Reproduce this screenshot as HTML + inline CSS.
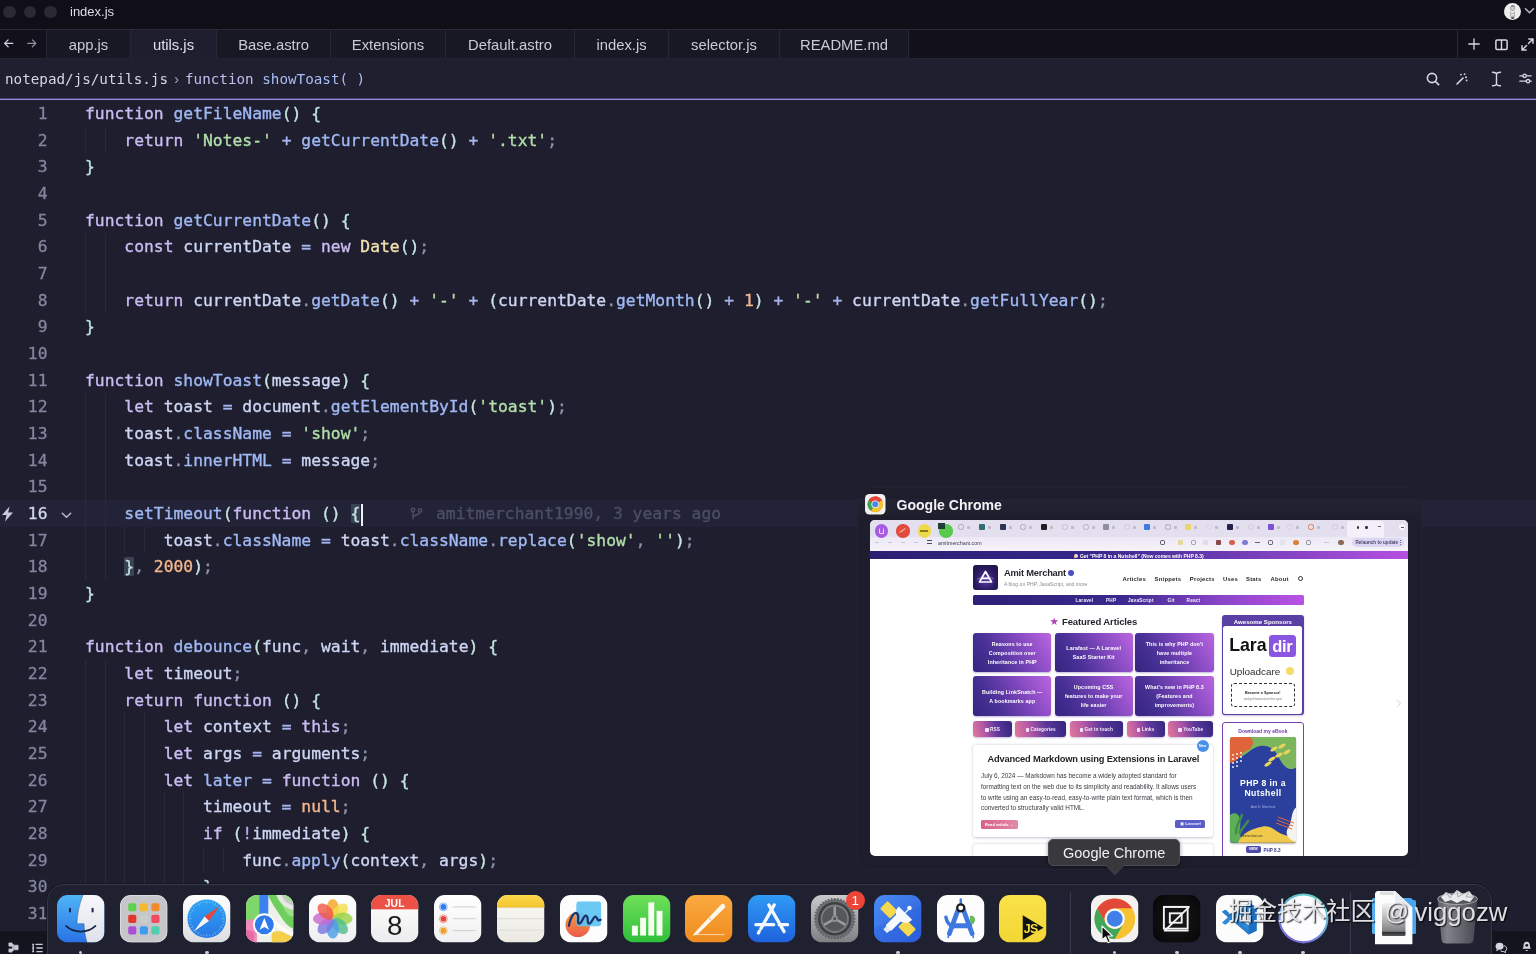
<!DOCTYPE html>
<html lang="en">
<head>
<meta charset="utf-8">
<title>index.js</title>
<style>
*{box-sizing:border-box;margin:0;padding:0}
html,body{width:1536px;height:954px;overflow:hidden;background:#1e1e2e}
body{position:relative;font-family:"Liberation Sans",sans-serif;color:#cdd6f4}
.abs{position:absolute}
svg{display:block;overflow:visible}
/* title bar */
#titlebar{position:absolute;left:0;top:0;width:1536px;height:29px;background:#100f18}
#titlebar .tl{position:absolute;top:5.5px;width:12.5px;height:12.5px;border-radius:50%;background:#2b2a33}
#titlebar .ttl{position:absolute;left:70px;top:4px;font-size:13px;line-height:16px;color:#dcdce6}
/* tab bar */
#tabbar{position:absolute;left:0;top:29px;width:1536px;height:30px;background:#12111b;border-top:1px solid #2a2a38;border-bottom:1px solid #242433}
.tab{position:absolute;top:0;height:28px;border-left:1px solid #262635;font-size:14.8px;line-height:31px;text-align:center;color:#c9cad8;background:#181824}
.tab.active{background:#1e1e2e;height:29px;color:#dfe0ee}
/* breadcrumb */
#crumb{position:absolute;left:0;top:59px;width:1536px;height:41px;background:#1f1f2f;border-bottom:1px solid #928bd6}
#crumb:after{content:'';position:absolute;left:0;top:39px;width:1536px;height:1px;background:#4a4678}
#crumb .p{position:absolute;left:5px;top:9px;font-family:"DejaVu Sans Mono","Liberation Mono",monospace;font-size:14.25px;line-height:22px;white-space:pre;color:#d6d6e6}
/* editor */
#editor{position:absolute;left:0;top:100px;width:1536px;height:854px;background:#1e1e2e;overflow:hidden}
.ln,.cl{position:absolute;font-family:"DejaVu Sans Mono","Liberation Mono",monospace;font-size:16.33px;line-height:26.67px;height:26.67px;white-space:pre}
.ln{left:0;width:47.5px;text-align:right;color:#83869f;-webkit-text-stroke:0.3px}
.cl{left:85px;color:#cdd6f4;-webkit-text-stroke:0.35px}
.hl{background:#3a4152;border-radius:1px}
.k{color:#cbbdf2}.f{color:#a0b9f4}.s{color:#b2dfa9}.n{color:#f3b68e}.y{color:#f1e1b0}.b{color:#bfe5de}.o{color:#a7b4ee}.c{color:#8e93ac}.p{color:#c6e6e2}
.guide{position:absolute;width:1px;background:#29293b}
#pv .t{white-space:nowrap}
#pv .abs{position:absolute}
#root{position:absolute;left:0;top:0;width:1536px;height:954px;will-change:transform;overflow:hidden}
</style>
</head>
<body>
<div id="root">
<div id="titlebar">
  <div class="tl" style="left:3px"></div><div class="tl" style="left:23.5px"></div><div class="tl" style="left:44px"></div>
  <div class="ttl">index.js</div>
  <svg class="abs" style="left:1503.500px;top:3px" width="17" height="17" viewBox="0 0 17 17"><circle cx="8.500" cy="8.500" r="8.500" fill="#ededed"/><path d="M6.500 4.500c0-2 4-2 4 0.300 0 1.800-0.600 2.700-2 2.700s-2-1-2-3z" fill="#d0d0d0" stroke="#6a6a6a" stroke-width="0.600"/><path d="M7.300 3.200c1-0.800 2.600-0.600 3.200 0.500" stroke="#333" stroke-width="0.700" fill="none"/><path d="M6.800 8.500c-0.500 2 0 5 0.500 7M10.200 8.500c0.500 2 0.300 5-0.200 7M7.500 10.500h2M7.800 13h1.500" stroke="#777" stroke-width="0.600" fill="none"/><path d="M7.500 13.500c0.800 0.600 1.500 0.600 2.300 0v2.500h-2.300z" fill="#555"/></svg>
  <svg class="abs" style="left:1524px;top:7px" width="11" height="8" viewBox="0 0 11 8"><path d="M1.5 1.8 L5.5 5.8 L9.5 1.8" fill="none" stroke="#b9bac8" stroke-width="1.5" stroke-linecap="round" stroke-linejoin="round"/></svg>
</div>
<div id="tabbar">
  <svg class="abs" style="left:3px;top:8px" width="11.500" height="10.700" viewBox="0 0 14 13"><path d="M12 6.5H2.2M6.2 2.3L2 6.5l4.2 4.2" fill="none" stroke="#d4d5e2" stroke-width="1.5" stroke-linecap="round" stroke-linejoin="round"/></svg>
  <svg class="abs" style="left:25.500px;top:8px" width="11.500" height="10.700" viewBox="0 0 14 13"><path d="M2 6.5h9.8M7.8 2.3L12 6.5l-4.2 4.2" fill="none" stroke="#8e8fa0" stroke-width="1.5" stroke-linecap="round" stroke-linejoin="round"/></svg>
  <div class="tab" style="left:46px;width:84px">app.js</div>
  <div class="tab active" style="left:130px;width:86px">utils.js</div>
  <div class="tab" style="left:216px;width:114px">Base.astro</div>
  <div class="tab" style="left:330px;width:115px">Extensions</div>
  <div class="tab" style="left:445px;width:129px">Default.astro</div>
  <div class="tab" style="left:574px;width:94px">index.js</div>
  <div class="tab" style="left:668px;width:111px">selector.js</div>
  <div class="tab" style="left:779px;width:129px">README.md</div>
  <div class="tab" style="left:908px;width:0;"></div>
  <div class="abs" style="left:1457px;top:0;width:1px;height:28px;background:#2a2a3a"></div>
  <svg class="abs" style="left:1468px;top:8px" width="12" height="12" viewBox="0 0 12 12"><path d="M6 0.8v10.4M0.8 6h10.4" fill="none" stroke="#d7d8e4" stroke-width="1.3" stroke-linecap="round"/></svg>
  <svg class="abs" style="left:1494.5px;top:8.5px" width="13" height="12" viewBox="0 0 13 12"><rect x="0.9" y="0.9" width="11.2" height="9.6" rx="1.2" fill="none" stroke="#d7d8e4" stroke-width="1.5"/><path d="M6.5 1v9.5" stroke="#d7d8e4" stroke-width="1.4"/></svg>
  <svg class="abs" style="left:1520.5px;top:7.5px" width="13" height="13" viewBox="0 0 13 13"><path d="M7.8 1h4.2v4.2M12 1L7.4 5.6M5.2 12H1V7.8M1 12l4.6-4.6" fill="none" stroke="#d7d8e4" stroke-width="1.4" stroke-linecap="round" stroke-linejoin="round"/></svg>
</div>
<div id="crumb">
  <div class="p">notepad/js/utils.js<span style="color:#a9a9bd;font-family:'Liberation Sans',sans-serif;display:inline-block;width:17px;text-align:center">›</span><span style="color:#c5bdf0">function</span> <span style="color:#a9bdf5">showToast( )</span></div>
  <svg class="abs" style="left:1426px;top:13px" width="14" height="14" viewBox="0 0 14 14"><circle cx="6" cy="6" r="4.6" fill="none" stroke="#d7d8e4" stroke-width="1.6"/><path d="M9.5 9.5L12.6 12.6" stroke="#d7d8e4" stroke-width="1.7" stroke-linecap="round"/></svg>
  <svg class="abs" style="left:1456px;top:14px" width="13" height="12" viewBox="0 0 13 12"><path d="M1 11L7 5" stroke="#d7d8e4" stroke-width="1.6" stroke-linecap="round"/><circle cx="5" cy="1.6" r="0.9" fill="#d7d8e4"/><circle cx="8.6" cy="1.2" r="0.9" fill="#d7d8e4"/><circle cx="10" cy="4.2" r="1" fill="#d7d8e4"/><circle cx="10.6" cy="7.4" r="0.9" fill="#d7d8e4"/></svg>
  <svg class="abs" style="left:1491px;top:12px" width="11" height="16" viewBox="0 0 11 16"><path d="M1.5 1.2c2.2 0 4 .4 4 2.2 0-1.8 1.8-2.2 4-2.2M1.5 14.8c2.2 0 4-.4 4-2.2 0 1.800 1.800 2.200 4 2.200M5.500 3v10" fill="none" stroke="#d7d8e4" stroke-width="1.400" stroke-linecap="round"/></svg>
  <svg class="abs" style="left:1519px;top:13px" width="13" height="13" viewBox="0 0 13 13"><path d="M0.800 3.800h3.200M7.600 3.800h4.600M0.800 9.200h6M11 9.200h1.200" stroke="#d7d8e4" stroke-width="1.300" stroke-linecap="round"/><circle cx="5.600" cy="3.800" r="1.700" fill="none" stroke="#d7d8e4" stroke-width="1.300"/><circle cx="9" cy="9.200" r="1.700" fill="none" stroke="#d7d8e4" stroke-width="1.300"/></svg>
</div>
<div id="editor">
<div class="abs" style="left:0;top:400.05px;width:1536px;height:26.67px;background:#232337"></div>
<div class="guide" style="left:85.0px;top:26.67px;height:26.67px"></div>
<div class="guide" style="left:104.7px;top:26.67px;height:26.67px"></div>
<div class="guide" style="left:85.0px;top:133.35px;height:26.67px"></div>
<div class="guide" style="left:104.7px;top:133.35px;height:26.67px"></div>
<div class="guide" style="left:85.0px;top:160.02px;height:26.67px"></div>
<div class="guide" style="left:104.7px;top:160.02px;height:26.67px"></div>
<div class="guide" style="left:85.0px;top:186.69px;height:26.67px"></div>
<div class="guide" style="left:104.7px;top:186.69px;height:26.67px"></div>
<div class="guide" style="left:85.0px;top:293.37px;height:26.67px"></div>
<div class="guide" style="left:104.7px;top:293.37px;height:26.67px"></div>
<div class="guide" style="left:85.0px;top:320.04px;height:26.67px"></div>
<div class="guide" style="left:104.7px;top:320.04px;height:26.67px"></div>
<div class="guide" style="left:85.0px;top:346.71px;height:26.67px"></div>
<div class="guide" style="left:104.7px;top:346.71px;height:26.67px"></div>
<div class="guide" style="left:85.0px;top:373.38px;height:26.67px"></div>
<div class="guide" style="left:104.7px;top:373.38px;height:26.67px"></div>
<div class="guide" style="left:85.0px;top:400.05px;height:26.67px"></div>
<div class="guide" style="left:104.7px;top:400.05px;height:26.67px"></div>
<div class="guide" style="left:85.0px;top:426.72px;height:26.67px"></div>
<div class="guide" style="left:104.7px;top:426.72px;height:26.67px"></div>
<div class="guide" style="left:124.3px;top:426.72px;height:26.67px"></div>
<div class="guide" style="left:144.0px;top:426.72px;height:26.67px"></div>
<div class="guide" style="left:85.0px;top:453.39px;height:26.67px"></div>
<div class="guide" style="left:104.7px;top:453.39px;height:26.67px"></div>
<div class="guide" style="left:85.0px;top:560.07px;height:26.67px"></div>
<div class="guide" style="left:104.7px;top:560.07px;height:26.67px"></div>
<div class="guide" style="left:85.0px;top:586.74px;height:26.67px"></div>
<div class="guide" style="left:104.7px;top:586.74px;height:26.67px"></div>
<div class="guide" style="left:85.0px;top:613.41px;height:26.67px"></div>
<div class="guide" style="left:104.7px;top:613.41px;height:26.67px"></div>
<div class="guide" style="left:124.3px;top:613.41px;height:26.67px"></div>
<div class="guide" style="left:144.0px;top:613.41px;height:26.67px"></div>
<div class="guide" style="left:85.0px;top:640.08px;height:26.67px"></div>
<div class="guide" style="left:104.7px;top:640.08px;height:26.67px"></div>
<div class="guide" style="left:124.3px;top:640.08px;height:26.67px"></div>
<div class="guide" style="left:144.0px;top:640.08px;height:26.67px"></div>
<div class="guide" style="left:85.0px;top:666.75px;height:26.67px"></div>
<div class="guide" style="left:104.7px;top:666.75px;height:26.67px"></div>
<div class="guide" style="left:124.3px;top:666.75px;height:26.67px"></div>
<div class="guide" style="left:144.0px;top:666.75px;height:26.67px"></div>
<div class="guide" style="left:85.0px;top:693.42px;height:26.67px"></div>
<div class="guide" style="left:104.7px;top:693.42px;height:26.67px"></div>
<div class="guide" style="left:124.3px;top:693.42px;height:26.67px"></div>
<div class="guide" style="left:144.0px;top:693.42px;height:26.67px"></div>
<div class="guide" style="left:163.6px;top:693.42px;height:26.67px"></div>
<div class="guide" style="left:183.3px;top:693.42px;height:26.67px"></div>
<div class="guide" style="left:85.0px;top:720.09px;height:26.67px"></div>
<div class="guide" style="left:104.7px;top:720.09px;height:26.67px"></div>
<div class="guide" style="left:124.3px;top:720.09px;height:26.67px"></div>
<div class="guide" style="left:144.0px;top:720.09px;height:26.67px"></div>
<div class="guide" style="left:163.6px;top:720.09px;height:26.67px"></div>
<div class="guide" style="left:183.3px;top:720.09px;height:26.67px"></div>
<div class="guide" style="left:85.0px;top:746.76px;height:26.67px"></div>
<div class="guide" style="left:104.7px;top:746.76px;height:26.67px"></div>
<div class="guide" style="left:124.3px;top:746.76px;height:26.67px"></div>
<div class="guide" style="left:144.0px;top:746.76px;height:26.67px"></div>
<div class="guide" style="left:163.6px;top:746.76px;height:26.67px"></div>
<div class="guide" style="left:183.3px;top:746.76px;height:26.67px"></div>
<div class="guide" style="left:203.0px;top:746.76px;height:26.67px"></div>
<div class="guide" style="left:222.6px;top:746.76px;height:26.67px"></div>
<div class="guide" style="left:85.0px;top:773.43px;height:26.67px"></div>
<div class="guide" style="left:104.7px;top:773.43px;height:26.67px"></div>
<div class="guide" style="left:124.3px;top:773.43px;height:26.67px"></div>
<div class="guide" style="left:144.0px;top:773.43px;height:26.67px"></div>
<div class="guide" style="left:163.6px;top:773.43px;height:26.67px"></div>
<div class="guide" style="left:183.3px;top:773.43px;height:26.67px"></div>
<div class="guide" style="left:85.0px;top:800.10px;height:26.67px"></div>
<div class="guide" style="left:104.7px;top:800.10px;height:26.67px"></div>
<div class="guide" style="left:124.3px;top:800.10px;height:26.67px"></div>
<div class="guide" style="left:144.0px;top:800.10px;height:26.67px"></div>
<div class="guide" style="left:85.0px;top:826.77px;height:26.67px"></div>
<div class="guide" style="left:104.7px;top:826.77px;height:26.67px"></div>
<div class="guide" style="left:124.3px;top:826.77px;height:26.67px"></div>
<div class="guide" style="left:144.0px;top:826.77px;height:26.67px"></div>
<div class="ln" style="top:1.00px">1</div>
<div class="cl" style="top:1.00px"><span class="k">function</span> <span class="f">getFileName</span><span class="p">()</span> <span class="b">{</span></div>
<div class="ln" style="top:27.67px">2</div>
<div class="cl" style="top:27.67px">    <span class="k">return</span> <span class="s">'Notes-'</span> <span class="o">+</span> <span class="f">getCurrentDate</span><span class="p">()</span> <span class="o">+</span> <span class="s">'.txt'</span><span class="c">;</span></div>
<div class="ln" style="top:54.34px">3</div>
<div class="cl" style="top:54.34px"><span class="b">}</span></div>
<div class="ln" style="top:81.01px">4</div>
<div class="ln" style="top:107.68px">5</div>
<div class="cl" style="top:107.68px"><span class="k">function</span> <span class="f">getCurrentDate</span><span class="p">()</span> <span class="b">{</span></div>
<div class="ln" style="top:134.35px">6</div>
<div class="cl" style="top:134.35px">    <span class="k">const</span> currentDate <span class="o">=</span> <span class="k">new</span> <span class="y">Date</span><span class="p">()</span><span class="c">;</span></div>
<div class="ln" style="top:161.02px">7</div>
<div class="ln" style="top:187.69px">8</div>
<div class="cl" style="top:187.69px">    <span class="k">return</span> currentDate<span class="c">.</span><span class="f">getDate</span><span class="p">()</span> <span class="o">+</span> <span class="s">'-'</span> <span class="o">+</span> <span class="p">(</span>currentDate<span class="c">.</span><span class="f">getMonth</span><span class="p">()</span> <span class="o">+</span> <span class="n">1</span><span class="p">)</span> <span class="o">+</span> <span class="s">'-'</span> <span class="o">+</span> currentDate<span class="c">.</span><span class="f">getFullYear</span><span class="p">()</span><span class="c">;</span></div>
<div class="ln" style="top:214.36px">9</div>
<div class="cl" style="top:214.36px"><span class="b">}</span></div>
<div class="ln" style="top:241.03px">10</div>
<div class="ln" style="top:267.70px">11</div>
<div class="cl" style="top:267.70px"><span class="k">function</span> <span class="f">showToast</span><span class="p">(</span>message<span class="p">)</span> <span class="b">{</span></div>
<div class="ln" style="top:294.37px">12</div>
<div class="cl" style="top:294.37px">    <span class="k">let</span> toast <span class="o">=</span> document<span class="c">.</span><span class="f">getElementById</span><span class="p">(</span><span class="s">'toast'</span><span class="p">)</span><span class="c">;</span></div>
<div class="ln" style="top:321.04px">13</div>
<div class="cl" style="top:321.04px">    toast<span class="c">.</span><span class="f">className</span> <span class="o">=</span> <span class="s">'show'</span><span class="c">;</span></div>
<div class="ln" style="top:347.71px">14</div>
<div class="cl" style="top:347.71px">    toast<span class="c">.</span><span class="f">innerHTML</span> <span class="o">=</span> message<span class="c">;</span></div>
<div class="ln" style="top:374.38px">15</div>
<div class="ln" style="top:401.05px;color:#d5d8ee">16</div>
<div class="cl" style="top:401.05px">    <span class="f">setTimeout</span><span class="p">(</span><span class="k">function</span> <span class="p">()</span> <span class="b hl">{</span></div>
<div class="ln" style="top:427.72px">17</div>
<div class="cl" style="top:427.72px">        toast<span class="c">.</span><span class="f">className</span> <span class="o">=</span> toast<span class="c">.</span><span class="f">className</span><span class="c">.</span><span class="f">replace</span><span class="p">(</span><span class="s">'show'</span><span class="c">,</span> <span class="s">''</span><span class="p">)</span><span class="c">;</span></div>
<div class="ln" style="top:454.39px">18</div>
<div class="cl" style="top:454.39px">    <span class="b hl">}</span><span class="c">,</span> <span class="n">2000</span><span class="p">)</span><span class="c">;</span></div>
<div class="ln" style="top:481.06px">19</div>
<div class="cl" style="top:481.06px"><span class="b">}</span></div>
<div class="ln" style="top:507.73px">20</div>
<div class="ln" style="top:534.40px">21</div>
<div class="cl" style="top:534.40px"><span class="k">function</span> <span class="f">debounce</span><span class="p">(</span>func<span class="c">,</span> wait<span class="c">,</span> immediate<span class="p">)</span> <span class="b">{</span></div>
<div class="ln" style="top:561.07px">22</div>
<div class="cl" style="top:561.07px">    <span class="k">let</span> timeout<span class="c">;</span></div>
<div class="ln" style="top:587.74px">23</div>
<div class="cl" style="top:587.74px">    <span class="k">return</span> <span class="k">function</span> <span class="p">()</span> <span class="b">{</span></div>
<div class="ln" style="top:614.41px">24</div>
<div class="cl" style="top:614.41px">        <span class="k">let</span> context <span class="o">=</span> <span class="k">this</span><span class="c">;</span></div>
<div class="ln" style="top:641.08px">25</div>
<div class="cl" style="top:641.08px">        <span class="k">let</span> args <span class="o">=</span> arguments<span class="c">;</span></div>
<div class="ln" style="top:667.75px">26</div>
<div class="cl" style="top:667.75px">        <span class="k">let</span> <span class="f">later</span> <span class="o">=</span> <span class="k">function</span> <span class="p">()</span> <span class="b">{</span></div>
<div class="ln" style="top:694.42px">27</div>
<div class="cl" style="top:694.42px">            timeout <span class="o">=</span> <span class="n">null</span><span class="c">;</span></div>
<div class="ln" style="top:721.09px">28</div>
<div class="cl" style="top:721.09px">            <span class="k">if</span> <span class="p">(</span><span class="o">!</span>immediate<span class="p">)</span> <span class="b">{</span></div>
<div class="ln" style="top:747.76px">29</div>
<div class="cl" style="top:747.76px">                func<span class="c">.</span><span class="f">apply</span><span class="p">(</span>context<span class="c">,</span> args<span class="p">)</span><span class="c">;</span></div>
<div class="ln" style="top:774.43px">30</div>
<div class="cl" style="top:774.43px">            <span class="b">}</span></div>
<div class="ln" style="top:801.10px">31</div>
<div class="cl" style="top:801.10px">        <span class="b">}</span><span class="c">;</span></div>
<div class="ln" style="top:827.77px">32</div>
<div class="abs" style="left:361px;top:403.55px;width:2px;height:22px;background:#f0f0f8"></div>
<div class="cl" style="left:436px;top:401.05px;color:#4b4e66">amitmerchant1990, 3 years ago</div>
<svg class="abs" style="left:410px;top:407.05px" width="13" height="14" viewBox="0 0 13 14"><circle cx="3" cy="3" r="1.7" fill="none" stroke="#4b4e66" stroke-width="1.4"/><circle cx="10" cy="3.4" r="1.7" fill="none" stroke="#4b4e66" stroke-width="1.4"/><path d="M3 4.8v7M3 10.500c0-3 7-2 7-5.500" fill="none" stroke="#4b4e66" stroke-width="1.400" stroke-linecap="round"/></svg>
<svg class="abs" style="left:1px;top:406.05px" width="13" height="16" viewBox="0 0 13 16"><path d="M8.5 0.500L1 9h4.500L4 15.500 12 6.500H7.200z" fill="#c9cbe0"/></svg>
<svg class="abs" style="left:61px;top:411.55px" width="11" height="7" viewBox="0 0 11 7"><path d="M1.300 1.300L5.500 5.300 9.700 1.300" fill="none" stroke="#b7b9cf" stroke-width="1.500" stroke-linecap="round" stroke-linejoin="round"/></svg>
</div>
<div class="abs" style="left:857px;top:487px;width:565px;height:383px;border-radius:12px;background:#1d1d2c;border:1px solid #222233;overflow:hidden"><div style="position:absolute;left:0;top:11px;width:565px;height:20px;background:linear-gradient(#222234,#20202f 60%,rgba(29,29,44,0))"></div></div>
<svg class="abs" style="left:864.5px;top:493.5px" width="20.500" height="20.500" viewBox="0 0 40 40">
<rect x="0" y="0" width="40" height="40" rx="9" fill="#f1f0ee"/>
<circle cx="20" cy="20" r="15" fill="#e0453a"/>
<path d="M20 20 L7 12.500 A15 15 0 0 0 12.500 33 Z" fill="#3aa757"/>
<path d="M20 20 L12.500 33 A15 15 0 0 0 33 12.500 Z" fill="#f5c230"/>
<path d="M20 20 L33 12.500 A15 15 0 0 0 7 12.500 Z" fill="#e0453a"/>
<path d="M20 5 A15 15 0 0 1 33 12.500 L20 12.500 Z" fill="#e0453a"/>
<path d="M33 12.500 A15 15 0 0 1 12.500 33 L20 20 Z" fill="#f5c230"/>
<circle cx="20" cy="20" r="7.500" fill="#f1f0ee"/><circle cx="20" cy="20" r="5.800" fill="#4a86e8"/>
</svg>
<div class="abs" style="left:896.5px;top:495.700px;font-size:14.050px;line-height:18px;font-weight:bold;color:#f2f2f6">Google Chrome</div>
<div id="pv" class="abs" style="left:869.7px;top:519.9px;width:538.300px;height:336.400px;border-radius:5px;overflow:hidden;background:#fff">
<div class="abs" style="left:0.0px;top:0.0px;width:538.3px;height:17.1px;background:#e4dfee"></div>
<div class="abs" style="left:0.0px;top:17.1px;width:538.3px;height:14.0px;background:linear-gradient(#ece8f5,#f6f3fb)"></div>
<div class="abs" style="left:5.1px;top:4.5px;width:13.2px;height:13.2px;border-radius:50%;background:#a65be2"></div>
<div class="abs" style="left:26.8px;top:4.5px;width:13.2px;height:13.2px;border-radius:50%;background:#e04b3e"></div>
<div class="abs" style="left:48.0px;top:4.5px;width:13.2px;height:13.2px;border-radius:50%;background:#efd948"></div>
<div class="abs" style="left:69.7px;top:4.5px;width:13.2px;height:13.2px;border-radius:50%;background:#57c94c"></div>
<div class="abs" style="left:8.9px;top:8.1px;width:5.6px;height:5.6px;border:1px solid #e9d4fa;border-radius:1.500px;border-top:none"></div>
<div class="abs" style="left:29.8px;top:10.6px;width:7.0px;height:1.0px;background:#f6b0a8;transform:rotate(-35deg)"></div>
<div class="abs" style="left:50.6px;top:10.5px;width:8.0px;height:1.2px;background:#8a7a1e"></div>
<div class="abs" style="left:68.3px;top:3.6px;width:7.0px;height:6.0px;background:#223b3a"></div>
<div class="abs" style="left:88.7px;top:4.5px;width:5.2px;height:5.2px;border:1px solid #a9a7b6;border-radius:50%"></div>
<div class="abs" style="left:97.3px;top:6.1px;width:3.5px;height:2.6px;background:#bdbac9;border-radius:1px"></div>
<div class="abs" style="left:109.7px;top:4.5px;width:5.2px;height:5.2px;background:#2f6f73;border-radius:1px"></div>
<div class="abs" style="left:118.3px;top:6.1px;width:3.5px;height:2.6px;background:#bdbac9;border-radius:1px"></div>
<div class="abs" style="left:130.7px;top:4.5px;width:5.2px;height:5.2px;background:#2c3358;border-radius:1px"></div>
<div class="abs" style="left:139.3px;top:6.1px;width:3.5px;height:2.6px;background:#bdbac9;border-radius:1px"></div>
<div class="abs" style="left:150.7px;top:4.5px;width:5.2px;height:5.2px;border:1px solid #a9a7b6;border-radius:50%"></div>
<div class="abs" style="left:159.3px;top:6.1px;width:3.5px;height:2.6px;background:#bdbac9;border-radius:1px"></div>
<div class="abs" style="left:171.7px;top:4.5px;width:5.2px;height:5.2px;background:#1f1f24;border-radius:1px"></div>
<div class="abs" style="left:180.3px;top:6.1px;width:3.5px;height:2.6px;background:#bdbac9;border-radius:1px"></div>
<div class="abs" style="left:192.7px;top:4.5px;width:5.2px;height:5.2px;border:1px solid #c3c1cf;border-radius:50%"></div>
<div class="abs" style="left:201.3px;top:6.1px;width:3.5px;height:2.6px;background:#bdbac9;border-radius:1px"></div>
<div class="abs" style="left:213.7px;top:4.5px;width:5.2px;height:5.2px;border:1px solid #b0afbd;border-radius:50%"></div>
<div class="abs" style="left:222.3px;top:6.1px;width:3.5px;height:2.6px;background:#bdbac9;border-radius:1px"></div>
<div class="abs" style="left:233.7px;top:4.5px;width:5.2px;height:5.2px;background:#8f8e9c;border-radius:1px"></div>
<div class="abs" style="left:242.3px;top:6.1px;width:3.5px;height:2.6px;background:#bdbac9;border-radius:1px"></div>
<div class="abs" style="left:254.7px;top:4.5px;width:5.2px;height:5.2px;border:1px solid #cfcdd8;border-radius:50%"></div>
<div class="abs" style="left:263.3px;top:6.1px;width:3.5px;height:2.6px;background:#bdbac9;border-radius:1px"></div>
<div class="abs" style="left:274.7px;top:4.5px;width:5.2px;height:5.2px;background:#3f7be0;border-radius:1px"></div>
<div class="abs" style="left:283.3px;top:6.1px;width:3.5px;height:2.6px;background:#bdbac9;border-radius:1px"></div>
<div class="abs" style="left:295.7px;top:4.5px;width:5.2px;height:5.2px;border:1px solid #a2a5b5;border-radius:50%"></div>
<div class="abs" style="left:304.3px;top:6.1px;width:3.5px;height:2.6px;background:#bdbac9;border-radius:1px"></div>
<div class="abs" style="left:315.7px;top:4.5px;width:5.2px;height:5.2px;background:#e8d66a;border-radius:1px"></div>
<div class="abs" style="left:324.3px;top:6.1px;width:3.5px;height:2.6px;background:#bdbac9;border-radius:1px"></div>
<div class="abs" style="left:336.7px;top:4.5px;width:5.2px;height:5.2px;border:1px solid #d9d7e2;border-radius:50%"></div>
<div class="abs" style="left:345.3px;top:6.1px;width:3.5px;height:2.6px;background:#bdbac9;border-radius:1px"></div>
<div class="abs" style="left:357.7px;top:4.5px;width:5.2px;height:5.2px;background:#23234a;border-radius:1px"></div>
<div class="abs" style="left:366.3px;top:6.1px;width:3.5px;height:2.6px;background:#bdbac9;border-radius:1px"></div>
<div class="abs" style="left:378.7px;top:4.5px;width:5.2px;height:5.2px;border:1px solid #d1cfdc;border-radius:50%"></div>
<div class="abs" style="left:387.3px;top:6.1px;width:3.5px;height:2.6px;background:#bdbac9;border-radius:1px"></div>
<div class="abs" style="left:398.7px;top:4.5px;width:5.2px;height:5.2px;background:#7e4fd6;border-radius:1px"></div>
<div class="abs" style="left:407.3px;top:6.1px;width:3.5px;height:2.6px;background:#bdbac9;border-radius:1px"></div>
<div class="abs" style="left:417.7px;top:4.5px;width:5.2px;height:5.2px;border:1px solid #d4d2de;border-radius:50%"></div>
<div class="abs" style="left:426.3px;top:6.1px;width:3.5px;height:2.6px;background:#bdbac9;border-radius:1px"></div>
<div class="abs" style="left:438.7px;top:4.5px;width:5.2px;height:5.2px;border:1px solid #e2774a;border-radius:50%"></div>
<div class="abs" style="left:447.3px;top:6.1px;width:3.5px;height:2.6px;background:#bdbac9;border-radius:1px"></div>
<div class="abs" style="left:462.7px;top:4.5px;width:5.2px;height:5.2px;border:1px solid #cfcdd8;border-radius:50%"></div>
<div class="abs" style="left:471.3px;top:6.1px;width:3.5px;height:2.6px;background:#bdbac9;border-radius:1px"></div>
<div class="abs" style="left:477.3px;top:1.6px;width:37.0px;height:15.5px;background:#f3f0fa;border-radius:3px 3px 0 0"></div>
<div class="abs" style="left:487.3px;top:6.3px;width:2.4px;height:2.4px;background:#34343c;border-radius:50%"></div>
<div class="abs" style="left:495.8px;top:6.3px;width:2.4px;height:2.4px;background:#34343c;border-radius:50%"></div>
<div class="abs" style="left:508.3px;top:6.6px;width:3.0px;height:1.0px;background:#6a6a75"></div>
<div class="abs" style="left:529.8px;top:4.1px;width:6.0px;height:6.0px;background:#fbfaff;border-radius:50%"></div>
<div class="abs" style="left:531.6px;top:6.7px;width:2.4px;height:1.0px;background:#55555f"></div>
<div class="abs" style="left:5.3px;top:21.9px;width:4.0px;height:1.0px;background:#c9c6d6"></div>
<div class="abs" style="left:18.3px;top:21.9px;width:4.0px;height:1.0px;background:#c9c6d6"></div>
<div class="abs" style="left:31.3px;top:21.9px;width:4.0px;height:1.0px;background:#c9c6d6"></div>
<div class="abs" style="left:44.3px;top:21.9px;width:4.0px;height:1.0px;background:#c9c6d6"></div>
<div class="abs" style="left:57.8px;top:20.6px;width:5.0px;height:1.0px;background:#4a4a58"></div>
<div class="abs" style="left:57.8px;top:23.1px;width:5.0px;height:1.0px;background:#4a4a58"></div>
<div class="abs t" style="left:68.3px;top:20.1px;font-size:5.30px;line-height:6.36px;color:#3b3b48">amitmerchant.com</div>
<div class="abs" style="left:290.8px;top:20.1px;width:5.0px;height:5.0px;border:1px solid #55555f;border-radius:1.500px"></div>
<div class="abs" style="left:308.8px;top:20.1px;width:5.0px;height:5.0px;background:#e6d79a;border-radius:1px"></div>
<div class="abs" style="left:321.8px;top:20.1px;width:5.0px;height:5.0px;border:1px solid #9a9aa6;border-radius:1.500px"></div>
<div class="abs" style="left:333.8px;top:20.1px;width:5.0px;height:5.0px;background:#dddbe6;border-radius:1px"></div>
<div class="abs" style="left:346.8px;top:20.1px;width:5.0px;height:5.0px;background:#8e4a4a;border-radius:1px"></div>
<div class="abs" style="left:359.5px;top:19.8px;width:5.6px;height:5.6px;background:#d8604f;border-radius:50%"></div>
<div class="abs" style="left:372.5px;top:19.8px;width:5.6px;height:5.6px;background:#7f7fd0;border-radius:50%"></div>
<div class="abs" style="left:385.8px;top:22.1px;width:5.0px;height:1.0px;background:#666"></div>
<div class="abs" style="left:398.8px;top:20.1px;width:5.0px;height:5.0px;border:1px solid #5a5a66;border-radius:1.500px"></div>
<div class="abs" style="left:410.8px;top:20.1px;width:5.0px;height:5.0px;background:#e3e1ea;border-radius:1px"></div>
<div class="abs" style="left:423.5px;top:19.8px;width:5.6px;height:5.6px;background:#d9813c;border-radius:50%"></div>
<div class="abs" style="left:436.8px;top:20.1px;width:5.0px;height:5.0px;border:1px solid #8a8a96;border-radius:1.500px"></div>
<div class="abs" style="left:454.8px;top:22.1px;width:5.0px;height:1.0px;background:#c9c6d6"></div>
<div class="abs" style="left:468.5px;top:19.8px;width:5.6px;height:5.6px;background:#8a6a58;border-radius:50%"></div>
<div class="abs" style="left:482.3px;top:18.4px;width:52.0px;height:8.7px;background:#dcd6f0;border-radius:4.500px"></div>
<div class="abs t" style="left:485.8px;top:20.6px;font-size:4.60px;line-height:5.52px;color:#4d4a70;font-weight:bold">Relaunch to update</div>
<div class="abs" style="left:530.5px;top:20.1px;width:1.2px;height:1.2px;background:#4d4a70;border-radius:50%"></div>
<div class="abs" style="left:530.5px;top:22.2px;width:1.2px;height:1.2px;background:#4d4a70;border-radius:50%"></div>
<div class="abs" style="left:530.5px;top:24.3px;width:1.2px;height:1.2px;background:#4d4a70;border-radius:50%"></div>
<div class="abs" style="left:0.0px;top:31.1px;width:538.3px;height:8.5px;background:linear-gradient(90deg,#2b1f72 0%,#35278a 40%,#6a3bb0 65%,#b650e2 100%)"></div>
<div class="abs t" style="left:119.1px;top:33.1px;width:300.0px;text-align:center;font-size:5.00px;line-height:6.00px;color:#fff;font-weight:bold"><span style="display:inline-block;width:4px;height:4px;margin-right:2px;border-radius:2px 2px 2px 0;background:linear-gradient(45deg,#f0a03c,#e8e4f4 60%);transform:rotate(0deg)"></span>Get "PHP 8 in a Nutshell" (Now comes with PHP 8.3)</div>
<div class="abs" style="left:103.3px;top:45.3px;width:25.0px;height:24.5px;border-radius:3px;background:radial-gradient(circle at 50% 60%,#5a3aa8 0,#2a1a5e 55%,#1b1240 100%)"><svg width="25" height="24.500" viewBox="0 0 25 24.500"><path d="M12.500 6.500L6.500 17h12zM9 13.300h7.500" fill="none" stroke="#fff" stroke-width="1.700" stroke-linejoin="round"/><path d="M4 14.500c5-3 12-3 17-0.500" stroke="#d9c8ff" stroke-width="0.600" fill="none" opacity="0.700"/></svg></div>
<div class="abs t" style="left:134.3px;top:48.2px;font-size:9.30px;line-height:11.16px;color:#26262e;font-weight:bold;letter-spacing:-0.200px">Amit Merchant</div>
<div class="abs" style="left:198.3px;top:50.1px;width:6.0px;height:6.0px;border-radius:50%;background:#4a4fc4"></div>
<div class="abs t" style="left:134.3px;top:61.4px;font-size:5.10px;line-height:6.12px;color:#8a8a96">A blog on PHP, JavaScript, and more</div>
<div class="abs t" style="left:252.9px;top:56.1px;font-size:5.90px;line-height:7.08px;color:#2a2a30;font-weight:bold;letter-spacing:0.220px">Articles</div>
<div class="abs t" style="left:284.9px;top:56.1px;font-size:5.90px;line-height:7.08px;color:#2a2a30;font-weight:bold;letter-spacing:0.220px">Snippets</div>
<div class="abs t" style="left:320.1px;top:56.1px;font-size:5.90px;line-height:7.08px;color:#2a2a30;font-weight:bold;letter-spacing:0.220px">Projects</div>
<div class="abs t" style="left:353.3px;top:56.1px;font-size:5.90px;line-height:7.08px;color:#2a2a30;font-weight:bold;letter-spacing:0.220px">Uses</div>
<div class="abs t" style="left:376.3px;top:56.1px;font-size:5.90px;line-height:7.08px;color:#2a2a30;font-weight:bold;letter-spacing:0.220px">Stats</div>
<div class="abs t" style="left:400.9px;top:56.1px;font-size:5.90px;line-height:7.08px;color:#2a2a30;font-weight:bold;letter-spacing:0.220px">About</div>
<div class="abs" style="left:428.3px;top:56.1px;width:5.5px;height:5.5px;border:1px solid #333;border-radius:50%"></div>
<div class="abs" style="left:103.3px;top:75.1px;width:331.0px;height:10.0px;border-radius:1.500px;background:linear-gradient(90deg,#2d2076 0%,#3a2a8e 45%,#8a45c8 75%,#b852e6 100%)"></div>
<div class="abs t" style="left:205.8px;top:78.2px;font-size:4.70px;line-height:5.64px;color:#f3ecff;font-weight:bold;letter-spacing:0.200px">Laravel</div>
<div class="abs t" style="left:236.3px;top:78.2px;font-size:4.70px;line-height:5.64px;color:#f3ecff;font-weight:bold;letter-spacing:0.200px">PHP</div>
<div class="abs t" style="left:258.3px;top:78.2px;font-size:4.70px;line-height:5.64px;color:#f3ecff;font-weight:bold;letter-spacing:0.200px">JavaScript</div>
<div class="abs t" style="left:297.9px;top:78.2px;font-size:4.70px;line-height:5.64px;color:#f3ecff;font-weight:bold;letter-spacing:0.200px">Git</div>
<div class="abs t" style="left:316.9px;top:78.2px;font-size:4.70px;line-height:5.64px;color:#f3ecff;font-weight:bold;letter-spacing:0.200px">React</div>
<div class="abs t" style="left:179.8px;top:95.1px;font-size:10.50px;line-height:12.60px;color:#b33fb8;font-family:'DejaVu Sans',sans-serif">★</div>
<div class="abs t" style="left:192.3px;top:96.4px;font-size:9.50px;line-height:11.40px;color:#26262e;font-weight:bold;letter-spacing:-0.120px">Featured Articles</div>
<div class="abs t" style="left:103.5px;top:113.0px;width:78.2px;height:39.3px;border-radius:3px;background:linear-gradient(58deg,#33257f 0%,#4a3197 30%,#8a4cc4 68%,#bb66e0 100%);box-shadow:0 1px 2px rgba(80,40,140,.35);display:flex;align-items:center;justify-content:center;text-align:center;color:#fff;font-weight:bold;font-size:5.300px;line-height:9px;letter-spacing:0.120px"><div style="padding-top:1.600px">Reasons to use<br>Composition over<br>Inheritance in PHP</div></div>
<div class="abs t" style="left:184.9px;top:113.0px;width:78.2px;height:39.3px;border-radius:3px;background:linear-gradient(58deg,#33257f 0%,#4a3197 30%,#8a4cc4 68%,#bb66e0 100%);box-shadow:0 1px 2px rgba(80,40,140,.35);display:flex;align-items:center;justify-content:center;text-align:center;color:#fff;font-weight:bold;font-size:5.300px;line-height:9px;letter-spacing:0.120px"><div style="padding-top:1.600px">Larafast — A Laravel<br>SaaS Starter Kit</div></div>
<div class="abs t" style="left:265.7px;top:113.0px;width:78.2px;height:39.3px;border-radius:3px;background:linear-gradient(58deg,#33257f 0%,#4a3197 30%,#8a4cc4 68%,#bb66e0 100%);box-shadow:0 1px 2px rgba(80,40,140,.35);display:flex;align-items:center;justify-content:center;text-align:center;color:#fff;font-weight:bold;font-size:5.300px;line-height:9px;letter-spacing:0.120px"><div style="padding-top:1.600px">This is why PHP don't<br>have multiple<br>inheritance</div></div>
<div class="abs t" style="left:103.5px;top:156.5px;width:78.2px;height:39.3px;border-radius:3px;background:linear-gradient(58deg,#33257f 0%,#4a3197 30%,#8a4cc4 68%,#bb66e0 100%);box-shadow:0 1px 2px rgba(80,40,140,.35);display:flex;align-items:center;justify-content:center;text-align:center;color:#fff;font-weight:bold;font-size:5.300px;line-height:9px;letter-spacing:0.120px"><div style="padding-top:1.600px">Building LinkSnatch —<br>A bookmarks app</div></div>
<div class="abs t" style="left:184.9px;top:156.5px;width:78.2px;height:39.3px;border-radius:3px;background:linear-gradient(58deg,#33257f 0%,#4a3197 30%,#8a4cc4 68%,#bb66e0 100%);box-shadow:0 1px 2px rgba(80,40,140,.35);display:flex;align-items:center;justify-content:center;text-align:center;color:#fff;font-weight:bold;font-size:5.300px;line-height:9px;letter-spacing:0.120px"><div style="padding-top:1.600px">Upcoming CSS<br>features to make your<br>life easier</div></div>
<div class="abs t" style="left:265.7px;top:156.5px;width:78.2px;height:39.3px;border-radius:3px;background:linear-gradient(58deg,#33257f 0%,#4a3197 30%,#8a4cc4 68%,#bb66e0 100%);box-shadow:0 1px 2px rgba(80,40,140,.35);display:flex;align-items:center;justify-content:center;text-align:center;color:#fff;font-weight:bold;font-size:5.300px;line-height:9px;letter-spacing:0.120px"><div style="padding-top:1.600px">What's new in PHP 8.3<br>(Features and<br>improvements)</div></div>
<div class="abs t" style="left:103.5px;top:201.2px;width:38.8px;height:15.8px;border-radius:3px;background:linear-gradient(75deg,#e07a98 0%,#b85aa6 28%,#5a379a 62%,#33267e 100%);box-shadow:0 1px 2px rgba(80,40,140,.3);display:flex;align-items:center;justify-content:center;color:#f6eefc;font-weight:bold;font-size:4.700px;line-height:6px;letter-spacing:0.100px;padding-top:1.600px"><span style="display:inline-block;width:3.500px;height:3.500px;background:#f4e6fa;border-radius:1px;margin-right:1.500px"></span>RSS</div>
<div class="abs t" style="left:145.7px;top:201.2px;width:50.6px;height:15.8px;border-radius:3px;background:linear-gradient(75deg,#e07a98 0%,#b85aa6 28%,#5a379a 62%,#33267e 100%);box-shadow:0 1px 2px rgba(80,40,140,.3);display:flex;align-items:center;justify-content:center;color:#f6eefc;font-weight:bold;font-size:4.700px;line-height:6px;letter-spacing:0.100px;padding-top:1.600px"><span style="display:inline-block;width:3.500px;height:3.500px;background:#f4e6fa;border-radius:1px;margin-right:1.500px"></span>Categories</div>
<div class="abs t" style="left:200.3px;top:201.2px;width:52.6px;height:15.8px;border-radius:3px;background:linear-gradient(75deg,#e07a98 0%,#b85aa6 28%,#5a379a 62%,#33267e 100%);box-shadow:0 1px 2px rgba(80,40,140,.3);display:flex;align-items:center;justify-content:center;color:#f6eefc;font-weight:bold;font-size:4.700px;line-height:6px;letter-spacing:0.100px;padding-top:1.600px"><span style="display:inline-block;width:3.500px;height:3.500px;background:#f4e6fa;border-radius:1px;margin-right:1.500px"></span>Get in touch</div>
<div class="abs t" style="left:256.9px;top:201.2px;width:38.0px;height:15.8px;border-radius:3px;background:linear-gradient(75deg,#e07a98 0%,#b85aa6 28%,#5a379a 62%,#33267e 100%);box-shadow:0 1px 2px rgba(80,40,140,.3);display:flex;align-items:center;justify-content:center;color:#f6eefc;font-weight:bold;font-size:4.700px;line-height:6px;letter-spacing:0.100px;padding-top:1.600px"><span style="display:inline-block;width:3.500px;height:3.500px;background:#f4e6fa;border-radius:1px;margin-right:1.500px"></span>Links</div>
<div class="abs t" style="left:298.3px;top:201.2px;width:45.5px;height:15.8px;border-radius:3px;background:linear-gradient(75deg,#e07a98 0%,#b85aa6 28%,#5a379a 62%,#33267e 100%);box-shadow:0 1px 2px rgba(80,40,140,.3);display:flex;align-items:center;justify-content:center;color:#f6eefc;font-weight:bold;font-size:4.700px;line-height:6px;letter-spacing:0.100px;padding-top:1.600px"><span style="display:inline-block;width:3.500px;height:3.500px;background:#f4e6fa;border-radius:1px;margin-right:1.500px"></span>YouTube</div>
<div class="abs" style="left:103.5px;top:225.1px;width:240.3px;height:92.0px;border-radius:3px;background:#fff;box-shadow:0 0.500px 3px rgba(60,50,90,.28)"></div>
<div class="abs t" style="left:93.6px;top:233.9px;width:260.0px;text-align:center;font-size:9.30px;line-height:11.16px;color:#1f1f26;font-weight:bold;letter-spacing:-0.150px;white-space:nowrap">Advanced Markdown using Extensions in Laravel</div>
<div class="abs t" style="left:111.3px;top:252.2px;font-size:6.38px;line-height:7.66px;color:#3a3a42;white-space:nowrap">July 6, 2024 — Markdown has become a widely adopted standard for</div>
<div class="abs t" style="left:111.3px;top:263.0px;font-size:6.38px;line-height:7.66px;color:#3a3a42;white-space:nowrap">formatting text on the web due to its simplicity and readability. It allows users</div>
<div class="abs t" style="left:111.3px;top:273.8px;font-size:6.38px;line-height:7.66px;color:#3a3a42;white-space:nowrap">to write using an easy-to-read, easy-to-write plain text format, which is then</div>
<div class="abs t" style="left:111.3px;top:284.6px;font-size:6.38px;line-height:7.66px;color:#3a3a42;white-space:nowrap">converted to structurally valid HTML.</div>
<div class="abs t" style="left:111.3px;top:299.7px;width:36.6px;height:9.0px;border-radius:1.500px;background:linear-gradient(90deg,#d9608c,#e08aa6);color:#fff;font-weight:bold;font-size:4.200px;line-height:9px;text-align:center">Read article →</div>
<div class="abs t" style="left:305.6px;top:300.1px;width:30.2px;height:8.3px;border-radius:1.500px;background:#5a5fc8;color:#eef;font-weight:bold;font-size:4.400px;line-height:8.300px;text-align:center"><span style="font-family:'DejaVu Sans',sans-serif">▣</span> Laravel</div>
<div class="abs t" style="left:326.9px;top:219.9px;width:12.0px;height:12.0px;border-radius:50%;background:#4a90e6;color:#fff;font-size:3.600px;line-height:12px;text-align:center;font-weight:bold">New</div>
<div class="abs" style="left:103.5px;top:324.1px;width:240.3px;height:26.0px;border-radius:3px;background:#fff;box-shadow:0 0.500px 3px rgba(60,50,90,.28)"></div>
<div class="abs t" style="left:93.6px;top:334.4px;width:260.0px;text-align:center;font-size:9.30px;line-height:11.16px;color:#1f1f26;font-weight:bold;letter-spacing:-0.150px;white-space:nowrap">A guide to PHP attributes</div>
<div class="abs" style="left:352.1px;top:94.8px;width:82.2px;height:100.8px;border-radius:3px;background:#5a3fa4;box-shadow:0 1px 2px rgba(80,40,140,.3)"></div>
<div class="abs t" style="left:353.2px;top:97.8px;width:80.0px;text-align:center;font-size:6.10px;line-height:7.32px;color:#fff;font-weight:bold">Awesome Sponsors</div>
<div class="abs" style="left:353.6px;top:106.6px;width:79.2px;height:87.5px;border-radius:2.500px;background:#fff"></div>
<div class="abs t" style="left:359.6px;top:115.6px;font-size:17.80px;line-height:21.36px;color:#111;font-weight:bold;letter-spacing:-0.100px">Lara</div>
<div class="abs t" style="left:399.1px;top:114.9px;width:27.2px;height:22.7px;border-radius:3.500px;background:#8a55e0;color:#fff;font-weight:bold;font-size:16.500px;line-height:22px;text-align:center;letter-spacing:-0.300px">dir</div>
<div class="abs t" style="left:360.0px;top:145.7px;font-size:9.90px;line-height:11.88px;color:#2a2a33">Uploadcare</div>
<div class="abs" style="left:416.3px;top:147.1px;width:8.0px;height:8.0px;border-radius:50%;background:#f2dc6a"></div>
<div class="abs" style="left:360.9px;top:163.6px;width:64.4px;height:23.2px;border:1.200px dashed #333;border-radius:3px"></div>
<div class="abs t" style="left:363.1px;top:170.8px;width:60.0px;text-align:center;font-size:3.80px;line-height:4.56px;color:#222;font-weight:bold">Become a Sponsor!</div>
<div class="abs t" style="left:363.1px;top:178.0px;width:60.0px;text-align:center;font-size:3.00px;line-height:3.60px;color:#777">and get featured on this spot</div>
<div class="abs" style="left:352.1px;top:202.4px;width:82.2px;height:147.7px;border-radius:3px;border:1px solid #7a3fb0;background:#fff"></div>
<div class="abs t" style="left:353.2px;top:208.6px;width:80.0px;text-align:center;font-size:5.00px;line-height:6.00px;color:#6a3aa8;font-weight:bold">Download my eBook</div>
<div class="abs" style="left:360.0px;top:217.4px;width:66.6px;height:105.7px;border-radius:3px;background:#2b409c;overflow:hidden;box-shadow:0 1px 2px rgba(0,0,0,.3)"><svg width="66.600" height="105.700" viewBox="0 0 66.600 105.700"><path d="M0 0h66.600v30c-8 6-14-2-18-10s-12-14-22-10-14 14-26 10z" fill="#7bb55e"/><path d="M0 0h20c6 4 2 12-4 14s-6 10-16 12z" fill="#e0643a"/><path d="M0 78c8-6 12 4 10 12s4 12 0 15.700H0z" fill="#5fae5a"/><path d="M8 105.700c4-10 14-14 24-16s14 6 22 8 10 4 12.600 8z" fill="#f0c84a"/><path d="M66.600 70c-6 4-4 14-8 20s-2 12 8 15.700z" fill="#f4f2ee"/><g fill="#e8d45a"><ellipse cx="44" cy="12" rx="4" ry="1.600" transform="rotate(-30 44 12)"/><ellipse cx="52" cy="9" rx="4" ry="1.600" transform="rotate(-30 52 9)"/><ellipse cx="49" cy="18" rx="4" ry="1.600" transform="rotate(-30 49 18)"/><ellipse cx="57" cy="15" rx="4" ry="1.600" transform="rotate(-30 57 15)"/><ellipse cx="42" cy="22" rx="4" ry="1.600" transform="rotate(-30 42 22)"/><ellipse cx="38" cy="27" rx="4" ry="1.600" transform="rotate(-30 38 27)"/></g><g fill="#fff"><circle cx="3" cy="18" r="0.900"/><circle cx="7" cy="17" r="0.900"/><circle cx="11" cy="16" r="0.900"/><circle cx="3" cy="22" r="0.900"/><circle cx="7" cy="21" r="0.900"/><circle cx="11" cy="20" r="0.900"/><circle cx="3" cy="26" r="0.900"/><circle cx="7" cy="25" r="0.900"/><circle cx="11" cy="24" r="0.900"/><circle cx="3" cy="30" r="0.900"/><circle cx="7" cy="29" r="0.900"/></g><path d="M48 80l16 6M47 83l16 6M46 86l16 6" stroke="#e0643a" stroke-width="1"/><path d="M6 96c0-8 4-12 6-18M10 96c2-6 6-8 8-12" stroke="#3f8f4a" stroke-width="2.500" fill="none" stroke-linecap="round"/></svg></div>
<div class="abs t" style="left:358.3px;top:257.9px;width:70.0px;text-align:center;font-size:8.60px;line-height:10.32px;color:#fff;font-weight:bold;letter-spacing:0.400px">PHP 8 in a</div>
<div class="abs t" style="left:358.3px;top:268.6px;width:70.0px;text-align:center;font-size:8.60px;line-height:10.32px;color:#fff;font-weight:bold;letter-spacing:0.400px">Nutshell</div>
<div class="abs t" style="left:358.3px;top:286.4px;width:70.0px;text-align:center;font-size:3.20px;line-height:3.84px;color:#aab6e8">Amit D. Merchant</div>
<div class="abs t" style="left:362.3px;top:315.2px;width:40.0px;text-align:center;font-size:2.60px;line-height:3.12px;color:#3a3a2a">amitmerchant.com</div>
<div class="abs t" style="left:376.3px;top:326.3px;width:15.0px;height:7.1px;border-radius:2px;background:#4a4aa8;color:#fff;font-weight:bold;font-size:3.600px;line-height:7.100px;text-align:center">NEW</div>
<div class="abs t" style="left:393.8px;top:327.8px;font-size:4.60px;line-height:5.52px;color:#3b3b8a;font-weight:bold">PHP 8.3</div>
<svg class="abs" style="left:526.8px;top:179.1px" width="6" height="9" viewBox="0 0 6 9"><path d="M1 1l3.500 3.500L1 8" fill="none" stroke="#e1e1e6" stroke-width="1.200"/></svg>
</div>
<div class="abs" style="left:1048.400px;top:839.300px;width:131.600px;height:26.700px;border-radius:5px;background:#38383d;border:1px solid #4b4b52;box-shadow:0 1px 4px rgba(0,0,0,.4)"></div>
<svg class="abs" style="left:1105.700px;top:865px" width="18" height="10" viewBox="0 0 18 10"><path d="M0 0h18L9 9.500z" fill="#38383d"/><path d="M0 0.500L9 9.500 18 0.500" fill="none" stroke="#4b4b52" stroke-width="1"/></svg>
<div class="abs" style="left:1048.400px;top:843.500px;width:131.600px;text-align:center;font-size:14.500px;line-height:18px;color:#f1f1f4">Google Chrome</div>
<div class="abs" style="left:0;top:931px;width:1536px;height:23px;background:#14141f"></div>
<svg class="abs" style="left:7.500px;top:942px" width="11" height="11" viewBox="0 0 12 12"><path d="M1 1h3.500v3.500H1zM1 7.500h3.500V11H1zM7 3.500h4v5H7zM4.500 2.700H6v6.500H4.500M6 6h1" fill="#c9cad8" stroke="#c9cad8" stroke-width="0.800"/></svg>
<svg class="abs" style="left:31px;top:942.500px" width="12.500" height="10" viewBox="0 0 13 11"><path d="M1 1.500h2M1 5.500h2M1 9.500h2M4.500 1.500h8M5.500 5.500h7M5.500 9.500h7M2 1.500v8" fill="none" stroke="#c9cad8" stroke-width="1.400"/></svg>
<svg class="abs" style="left:1494.500px;top:941.500px" width="12.500" height="10.800" viewBox="0 0 15 13"><ellipse cx="5.500" cy="5" rx="4.800" ry="4.200" fill="#d5d6e2"/><path d="M2 8l-0.500 3 3-1.500z" fill="#d5d6e2"/><path d="M11 4.500c2 0.500 3 2 3 3.500 0 1.300-0.700 2.300-1.700 3l0.300 1.800-2-1.200c-1.600 0.200-3-0.200-4-1" fill="none" stroke="#d5d6e2" stroke-width="1.200"/></svg>
<svg class="abs" style="left:1521.500px;top:941px" width="9.500" height="11" viewBox="0 0 12 14"><path d="M6 1c2.600 0 4 2 4 4.500 0 2.500 0.600 3.500 1.500 4.500h-11C1.400 9 2 8 2 5.500 2 3 3.400 1 6 1z" fill="#d5d6e2"/><path d="M4.300 11.500a1.800 1.800 0 0 0 3.400 0z" fill="#d5d6e2"/><circle cx="6" cy="5.500" r="1.800" fill="#13131d"/></svg>
<div class="abs" style="left:46.500px;top:884px;width:1445px;height:90px;border-radius:17px;background:#1f2030;border:1px solid #353649;box-shadow:0 0 0 0.500px #0e0e16"></div>
<svg class="abs" style="left:56.8px;top:894.5px" width="47.5" height="47.5" viewBox="0 0 48 48"><defs><clipPath id="c80"><rect width="48" height="48" rx="10.800"/></clipPath><linearGradient id="fnL" x1="0" y1="0" x2="0" y2="1"><stop offset="0" stop-color="#4fb4f6"/><stop offset="1" stop-color="#2a72e6"/></linearGradient><linearGradient id="fnR" x1="0" y1="0" x2="0" y2="1"><stop offset="0" stop-color="#f7f8fb"/><stop offset="1" stop-color="#dde1ea"/></linearGradient></defs><g clip-path="url(#c80)"><rect width="48" height="48" fill="url(#fnL)"/>
<path d="M26.300 0H48V48H30.300C28.500 42 27.500 35 27.300 29H20.200C20.500 18 23 8 26.300 0Z" fill="url(#fnR)"/>
<path d="M26.300 0C23 8 20.500 18 20.200 29H27.300C27.500 35 28.500 42 30.300 48" fill="none" stroke="#1c3a68" stroke-width="0.800" opacity=".5"/>
<rect x="12.100" y="12.800" width="2.100" height="5" rx="1.050" fill="#1a2c4a"/><rect x="34.900" y="12.800" width="2.100" height="5" rx="1.050" fill="#1a2c4a"/>
<path d="M9.100 31.300c8 7.600 21.800 7.600 29.800 0" fill="none" stroke="#16253f" stroke-width="1.700" stroke-linecap="round"/></g></svg>
<svg class="abs" style="left:119.7px;top:894.5px" width="47.5" height="47.5" viewBox="0 0 48 48"><defs><clipPath id="c143"><rect width="48" height="48" rx="10.800"/></clipPath></defs><g clip-path="url(#c143)"><rect width="48" height="48" fill="#c6c6ca"/><rect x="0.500" y="0.500" width="47" height="47" rx="10.500" fill="none" stroke="#dcdce0" stroke-width="1"/><rect x="8.3" y="8.3" width="8.200" height="8.200" rx="1.800" fill="#5fd04f"/><rect x="20.0" y="8.3" width="8.200" height="8.200" rx="1.800" fill="#f5b92e"/><rect x="31.7" y="8.3" width="8.200" height="8.200" rx="1.800" fill="#f08a2a"/><rect x="8.3" y="20.0" width="8.200" height="8.200" rx="1.800" fill="#e0382c"/><rect x="20.0" y="20.0" width="8.200" height="8.200" rx="1.800" fill="#c9cdc9"/><rect x="31.7" y="20.0" width="8.200" height="8.200" rx="1.800" fill="#ee4a62"/><rect x="8.3" y="31.7" width="8.200" height="8.200" rx="1.800" fill="#a94fd8"/><rect x="20.0" y="31.7" width="8.200" height="8.200" rx="1.800" fill="#3f9bf0"/><rect x="31.7" y="31.7" width="8.200" height="8.200" rx="1.800" fill="#4fcfae"/></g></svg>
<svg class="abs" style="left:183.1px;top:894.5px" width="47.5" height="47.5" viewBox="0 0 48 48"><defs><clipPath id="c206"><rect width="48" height="48" rx="10.800"/></clipPath><linearGradient id="sfb" x1="0" y1="0" x2="0" y2="1"><stop offset="0" stop-color="#ffffff"/><stop offset="1" stop-color="#dcdde0"/></linearGradient><linearGradient id="sfc" x1="0" y1="0" x2="0" y2="1"><stop offset="0" stop-color="#2aa4f4"/><stop offset="1" stop-color="#2a78e4"/></linearGradient></defs><g clip-path="url(#c206)"><rect width="48" height="48" fill="url(#sfb)"/><circle cx="24" cy="24" r="19.500" fill="url(#sfc)"/><path d="M39.50 24.00L42.00 24.00" stroke="#cfe6fb" stroke-width="0.500"/><path d="M40.25 26.87L41.73 27.13" stroke="#cfe6fb" stroke-width="0.500"/><path d="M39.50 29.64L40.91 30.16" stroke="#cfe6fb" stroke-width="0.500"/><path d="M37.42 31.75L39.59 33.00" stroke="#cfe6fb" stroke-width="0.500"/><path d="M36.64 34.61L37.79 35.57" stroke="#cfe6fb" stroke-width="0.500"/><path d="M34.61 36.64L35.57 37.79" stroke="#cfe6fb" stroke-width="0.500"/><path d="M31.75 37.42L33.00 39.59" stroke="#cfe6fb" stroke-width="0.500"/><path d="M29.64 39.50L30.16 40.91" stroke="#cfe6fb" stroke-width="0.500"/><path d="M26.87 40.25L27.13 41.73" stroke="#cfe6fb" stroke-width="0.500"/><path d="M24.00 39.50L24.00 42.00" stroke="#cfe6fb" stroke-width="0.500"/><path d="M21.13 40.25L20.87 41.73" stroke="#cfe6fb" stroke-width="0.500"/><path d="M18.36 39.50L17.84 40.91" stroke="#cfe6fb" stroke-width="0.500"/><path d="M16.25 37.42L15.00 39.59" stroke="#cfe6fb" stroke-width="0.500"/><path d="M13.39 36.64L12.43 37.79" stroke="#cfe6fb" stroke-width="0.500"/><path d="M11.36 34.61L10.21 35.57" stroke="#cfe6fb" stroke-width="0.500"/><path d="M10.58 31.75L8.41 33.00" stroke="#cfe6fb" stroke-width="0.500"/><path d="M8.50 29.64L7.09 30.16" stroke="#cfe6fb" stroke-width="0.500"/><path d="M7.75 26.87L6.27 27.13" stroke="#cfe6fb" stroke-width="0.500"/><path d="M8.50 24.00L6.00 24.00" stroke="#cfe6fb" stroke-width="0.500"/><path d="M7.75 21.13L6.27 20.87" stroke="#cfe6fb" stroke-width="0.500"/><path d="M8.50 18.36L7.09 17.84" stroke="#cfe6fb" stroke-width="0.500"/><path d="M10.58 16.25L8.41 15.00" stroke="#cfe6fb" stroke-width="0.500"/><path d="M11.36 13.39L10.21 12.43" stroke="#cfe6fb" stroke-width="0.500"/><path d="M13.39 11.36L12.43 10.21" stroke="#cfe6fb" stroke-width="0.500"/><path d="M16.25 10.58L15.00 8.41" stroke="#cfe6fb" stroke-width="0.500"/><path d="M18.36 8.50L17.84 7.09" stroke="#cfe6fb" stroke-width="0.500"/><path d="M21.13 7.75L20.87 6.27" stroke="#cfe6fb" stroke-width="0.500"/><path d="M24.00 8.50L24.00 6.00" stroke="#cfe6fb" stroke-width="0.500"/><path d="M26.87 7.75L27.13 6.27" stroke="#cfe6fb" stroke-width="0.500"/><path d="M29.64 8.50L30.16 7.09" stroke="#cfe6fb" stroke-width="0.500"/><path d="M31.75 10.58L33.00 8.41" stroke="#cfe6fb" stroke-width="0.500"/><path d="M34.61 11.36L35.57 10.21" stroke="#cfe6fb" stroke-width="0.500"/><path d="M36.64 13.39L37.79 12.43" stroke="#cfe6fb" stroke-width="0.500"/><path d="M37.42 16.25L39.59 15.00" stroke="#cfe6fb" stroke-width="0.500"/><path d="M39.50 18.36L40.91 17.84" stroke="#cfe6fb" stroke-width="0.500"/><path d="M40.25 21.13L41.73 20.87" stroke="#cfe6fb" stroke-width="0.500"/><path d="M37 11L21.800 21.800 26.200 26.200z" fill="#e8453a"/><path d="M11 37L21.800 21.800 26.200 26.200z" fill="#f4f6f8"/></g></svg>
<svg class="abs" style="left:245.9px;top:894.5px" width="47.5" height="47.5" viewBox="0 0 48 48"><defs><clipPath id="c269"><rect width="48" height="48" rx="10.800"/></clipPath></defs><g clip-path="url(#c269)"><rect width="48" height="48" fill="#eef0ea"/>
<path d="M0 0h14v22C8 24 4 30 0 32z" fill="#7fd66a"/>
<path d="M22 0h26v34c-6-2-10-8-14-14S26 8 22 0z" fill="#6fcf5c"/>
<path d="M30 0h18v22c-4 0-8-4-10-9S32 4 30 0z" fill="#9adf8a"/>
<path d="M36 0c2 5 6 9 12 10v5c-8-1-14-6-17-15z" fill="#e6e6e2"/><path d="M39 0c2 4 5 6 9 7v3c-6-1-10-4-12-10z" fill="#c9c9c6"/>
<path d="M0 26c4-2 8-2 11 0v22H0z" fill="#f08ab8"/><path d="M0 36c3-1 6 0 8 2v10H0z" fill="#e66aa6"/>
<path d="M26 38c5-2 12-2 18 2l4 3v5H26z" fill="#f3cf4a"/>
<path d="M30 26c5 4 12 10 18 12v4c-8-2-16-8-21-13z" fill="#fafaf7"/>
<rect x="13.500" y="0" width="9" height="22" fill="#3b82f0"/>
<circle cx="18.500" cy="30" r="11.500" fill="#fbfbfb"/><circle cx="18.500" cy="30" r="9.600" fill="#2f7bea"/>
<path d="M18.500 23.200L13.700 35l4.800-2.600 4.800 2.600z" fill="#fff"/></g></svg>
<svg class="abs" style="left:308.8px;top:894.5px" width="47.5" height="47.5" viewBox="0 0 48 48"><defs><clipPath id="c332"><rect width="48" height="48" rx="10.800"/></clipPath><linearGradient id="phb" x1="0" y1="0" x2="0" y2="1"><stop offset="0" stop-color="#ffffff"/><stop offset="1" stop-color="#eeeef0"/></linearGradient></defs><g clip-path="url(#c332)"><rect width="48" height="48" fill="url(#phb)"/><ellipse cx="24" cy="13.800" rx="6.200" ry="9.800" fill="#f5a623" opacity=".82" transform="rotate(0 24 24)"/><ellipse cx="24" cy="13.800" rx="6.200" ry="9.800" fill="#f0e04a" opacity=".82" transform="rotate(45 24 24)"/><ellipse cx="24" cy="13.800" rx="6.200" ry="9.800" fill="#9bd34a" opacity=".82" transform="rotate(90 24 24)"/><ellipse cx="24" cy="13.800" rx="6.200" ry="9.800" fill="#4fc08a" opacity=".82" transform="rotate(135 24 24)"/><ellipse cx="24" cy="13.800" rx="6.200" ry="9.800" fill="#4a9ee8" opacity=".82" transform="rotate(180 24 24)"/><ellipse cx="24" cy="13.800" rx="6.200" ry="9.800" fill="#7a78e0" opacity=".82" transform="rotate(225 24 24)"/><ellipse cx="24" cy="13.800" rx="6.200" ry="9.800" fill="#c86ad0" opacity=".82" transform="rotate(270 24 24)"/><ellipse cx="24" cy="13.800" rx="6.200" ry="9.800" fill="#ef5a4a" opacity=".82" transform="rotate(315 24 24)"/></g></svg>
<svg class="abs" style="left:370.9px;top:894.5px" width="47.5" height="47.5" viewBox="0 0 48 48"><defs><clipPath id="c394"><rect width="48" height="48" rx="10.800"/></clipPath><linearGradient id="clb" x1="0" y1="0" x2="0" y2="1"><stop offset="0" stop-color="#ffffff"/><stop offset="1" stop-color="#ececee"/></linearGradient></defs><g clip-path="url(#c394)"><rect width="48" height="48" fill="url(#clb)"/><rect width="48" height="14.500" fill="#ec5145"/><text x="24" y="11.800" text-anchor="middle" font-family="Liberation Sans, sans-serif" font-weight="bold" font-size="10.500" fill="#fff" letter-spacing="0.200">JUL</text><text x="24" y="40" text-anchor="middle" font-family="Liberation Sans, sans-serif" font-size="28" fill="#1c1c1e">8</text></g></svg>
<svg class="abs" style="left:433.8px;top:894.5px" width="47.5" height="47.5" viewBox="0 0 48 48"><defs><clipPath id="c457"><rect width="48" height="48" rx="10.800"/></clipPath><linearGradient id="rmb" x1="0" y1="0" x2="0" y2="1"><stop offset="0" stop-color="#ffffff"/><stop offset="1" stop-color="#f0f0f2"/></linearGradient></defs><g clip-path="url(#c457)"><rect width="48" height="48" fill="url(#rmb)"/><circle cx="9.500" cy="12" r="4" fill="none" stroke="#2f7bf0" stroke-width="0.900" opacity=".6"/><circle cx="9.500" cy="12" r="2.900" fill="#2f7bf0"/><path d="M19 12h23" stroke="#c9c9cc" stroke-width="0.900"/><circle cx="9.500" cy="24" r="4" fill="none" stroke="#e8453a" stroke-width="0.900" opacity=".6"/><circle cx="9.500" cy="24" r="2.900" fill="#e8453a"/><path d="M19 24h23" stroke="#c9c9cc" stroke-width="0.900"/><circle cx="9.500" cy="36" r="4" fill="none" stroke="#f0a02a" stroke-width="0.900" opacity=".6"/><circle cx="9.500" cy="36" r="2.900" fill="#f0a02a"/><path d="M19 36h23" stroke="#c9c9cc" stroke-width="0.900"/></g></svg>
<svg class="abs" style="left:496.6px;top:894.5px" width="47.5" height="47.5" viewBox="0 0 48 48"><defs><clipPath id="c520"><rect width="48" height="48" rx="10.800"/></clipPath><linearGradient id="ntb" x1="0" y1="0" x2="0" y2="1"><stop offset="0" stop-color="#fbfaf6"/><stop offset="1" stop-color="#ebe9e2"/></linearGradient><linearGradient id="nty" x1="0" y1="0" x2="0" y2="1"><stop offset="0" stop-color="#fbd84a"/><stop offset="1" stop-color="#f5c530"/></linearGradient></defs><g clip-path="url(#c520)"><rect width="48" height="48" fill="url(#ntb)"/><rect width="48" height="12.500" fill="url(#nty)"/><path d="M0 12.700h48" stroke="#d9c27a" stroke-width="0.600"/><path d="M0 24h48M0 35.500h48" stroke="#d8d6cf" stroke-width="0.800"/></g></svg>
<svg class="abs" style="left:560.0px;top:894.5px" width="47.5" height="47.5" viewBox="0 0 48 48"><defs><clipPath id="c583"><rect width="48" height="48" rx="10.800"/></clipPath><linearGradient id="ffo" x1="0" y1="0" x2="0" y2="1"><stop offset="0" stop-color="#f0a040"/><stop offset="1" stop-color="#ee5a4a"/></linearGradient></defs><g clip-path="url(#c583)"><rect width="48" height="48" fill="#fdfdfd"/><circle cx="18" cy="30" r="12.500" fill="url(#ffo)"/><rect x="16.500" y="6.500" width="25" height="25" rx="2.500" fill="#5ec4f2" opacity=".92"/><path transform="translate(0 3)" d="M9 28c2-10 6-15 8.500-12s-1 10 2 10 4-9 7-8 0 8 3 8 4-8 6.500-7 1 5 5 3" fill="none" stroke="#1c3270" stroke-width="2.300" stroke-linecap="round" stroke-linejoin="round"/></g></svg>
<svg class="abs" style="left:622.5px;top:894.5px" width="47.5" height="47.5" viewBox="0 0 48 48"><defs><clipPath id="c646"><rect width="48" height="48" rx="10.800"/></clipPath><linearGradient id="nmb" x1="0" y1="0" x2="0" y2="1"><stop offset="0" stop-color="#6fe05a"/><stop offset="1" stop-color="#2fbf3a"/></linearGradient></defs><g clip-path="url(#c646)"><rect width="48" height="48" fill="url(#nmb)"/><rect x="9" y="31" width="6" height="10" fill="#f4fff0"/><rect x="17.300" y="23" width="6" height="18" fill="#f4fff0"/><rect x="25.600" y="7.500" width="6" height="33.500" fill="#f4fff0"/><rect x="33.900" y="16" width="6" height="25" fill="#f4fff0"/></g></svg>
<svg class="abs" style="left:685.2px;top:894.5px" width="47.5" height="47.5" viewBox="0 0 48 48"><defs><clipPath id="c709"><rect width="48" height="48" rx="10.800"/></clipPath><linearGradient id="pgb" x1="0" y1="0" x2="0" y2="1"><stop offset="0" stop-color="#f9aa3e"/><stop offset="1" stop-color="#f08a20"/></linearGradient></defs><g clip-path="url(#c709)"><rect width="48" height="48" fill="url(#pgb)"/><path d="M8 40h32" stroke="#fbe0b8" stroke-width="0.900"/><path d="M9.500 38.500L36.500 9.500a2.600 2.600 0 0 1 3.800 3.400L13 39.500l-4.500 1.800z" fill="#fdf6ea"/><path d="M24 23l2.500 2.500" stroke="#d9a85a" stroke-width="1"/></g></svg>
<svg class="abs" style="left:748.0px;top:894.5px" width="47.5" height="47.5" viewBox="0 0 48 48"><defs><clipPath id="c771"><rect width="48" height="48" rx="10.800"/></clipPath><linearGradient id="asb" x1="0" y1="0" x2="0" y2="1"><stop offset="0" stop-color="#2f9af4"/><stop offset="1" stop-color="#1f62dc"/></linearGradient></defs><g clip-path="url(#c771)"><rect width="48" height="48" fill="url(#asb)"/><g fill="none" stroke="#f4f8ff" stroke-width="3.300" stroke-linecap="round"><path d="M26.500 10L13 34"/><path d="M21 10l15.500 27"/><path d="M8 30h18M31.500 30h8.500"/><path d="M11.500 36.500l-1 2"/></g></g></svg>
<svg class="abs" style="left:811.0px;top:894.5px" width="47.5" height="47.5" viewBox="0 0 48 48"><defs><clipPath id="c834"><rect width="48" height="48" rx="10.800"/></clipPath><linearGradient id="spb" x1="0" y1="0" x2="0" y2="1"><stop offset="0" stop-color="#c9cacc"/><stop offset="1" stop-color="#7e8084"/></linearGradient></defs><g clip-path="url(#c834)"><rect width="48" height="48" fill="url(#spb)"/><circle cx="24" cy="24" r="20" fill="#6e7074"/><path d="M42.50 24.00L45.00 24.00" stroke="#5f6166" stroke-width="1.500"/><path d="M42.27 26.89L44.74 27.29" stroke="#5f6166" stroke-width="1.500"/><path d="M41.59 29.72L43.97 30.49" stroke="#5f6166" stroke-width="1.500"/><path d="M40.48 32.40L42.71 33.53" stroke="#5f6166" stroke-width="1.500"/><path d="M38.97 34.87L40.99 36.34" stroke="#5f6166" stroke-width="1.500"/><path d="M37.08 37.08L38.85 38.85" stroke="#5f6166" stroke-width="1.500"/><path d="M34.87 38.97L36.34 40.99" stroke="#5f6166" stroke-width="1.500"/><path d="M32.40 40.48L33.53 42.71" stroke="#5f6166" stroke-width="1.500"/><path d="M29.72 41.59L30.49 43.97" stroke="#5f6166" stroke-width="1.500"/><path d="M26.89 42.27L27.29 44.74" stroke="#5f6166" stroke-width="1.500"/><path d="M24.00 42.50L24.00 45.00" stroke="#5f6166" stroke-width="1.500"/><path d="M21.11 42.27L20.71 44.74" stroke="#5f6166" stroke-width="1.500"/><path d="M18.28 41.59L17.51 43.97" stroke="#5f6166" stroke-width="1.500"/><path d="M15.60 40.48L14.47 42.71" stroke="#5f6166" stroke-width="1.500"/><path d="M13.13 38.97L11.66 40.99" stroke="#5f6166" stroke-width="1.500"/><path d="M10.92 37.08L9.15 38.85" stroke="#5f6166" stroke-width="1.500"/><path d="M9.03 34.87L7.01 36.34" stroke="#5f6166" stroke-width="1.500"/><path d="M7.52 32.40L5.29 33.53" stroke="#5f6166" stroke-width="1.500"/><path d="M6.41 29.72L4.03 30.49" stroke="#5f6166" stroke-width="1.500"/><path d="M5.73 26.89L3.26 27.29" stroke="#5f6166" stroke-width="1.500"/><path d="M5.50 24.00L3.00 24.00" stroke="#5f6166" stroke-width="1.500"/><path d="M5.73 21.11L3.26 20.71" stroke="#5f6166" stroke-width="1.500"/><path d="M6.41 18.28L4.03 17.51" stroke="#5f6166" stroke-width="1.500"/><path d="M7.52 15.60L5.29 14.47" stroke="#5f6166" stroke-width="1.500"/><path d="M9.03 13.13L7.01 11.66" stroke="#5f6166" stroke-width="1.500"/><path d="M10.92 10.92L9.15 9.15" stroke="#5f6166" stroke-width="1.500"/><path d="M13.13 9.03L11.66 7.01" stroke="#5f6166" stroke-width="1.500"/><path d="M15.60 7.52L14.47 5.29" stroke="#5f6166" stroke-width="1.500"/><path d="M18.28 6.41L17.51 4.03" stroke="#5f6166" stroke-width="1.500"/><path d="M21.11 5.73L20.71 3.26" stroke="#5f6166" stroke-width="1.500"/><path d="M24.00 5.50L24.00 3.00" stroke="#5f6166" stroke-width="1.500"/><path d="M26.89 5.73L27.29 3.26" stroke="#5f6166" stroke-width="1.500"/><path d="M29.72 6.41L30.49 4.03" stroke="#5f6166" stroke-width="1.500"/><path d="M32.40 7.52L33.53 5.29" stroke="#5f6166" stroke-width="1.500"/><path d="M34.87 9.03L36.34 7.01" stroke="#5f6166" stroke-width="1.500"/><path d="M37.08 10.92L38.85 9.15" stroke="#5f6166" stroke-width="1.500"/><path d="M38.97 13.13L40.99 11.66" stroke="#5f6166" stroke-width="1.500"/><path d="M40.48 15.60L42.71 14.47" stroke="#5f6166" stroke-width="1.500"/><path d="M41.59 18.28L43.97 17.51" stroke="#5f6166" stroke-width="1.500"/><path d="M42.27 21.11L44.74 20.71" stroke="#5f6166" stroke-width="1.500"/><circle cx="24" cy="24" r="17" fill="#3e4044"/><circle cx="24" cy="24" r="14.300" fill="#7a7c80"/><circle cx="24" cy="24" r="12.500" fill="#55575b"/><path d="M24 24V11.500M24 24l10.800 6.300M24 24l-10.800 6.300" stroke="#9a9ca0" stroke-width="2.600"/><circle cx="24" cy="24" r="3.200" fill="#8e9094"/><circle cx="24" cy="24" r="1.500" fill="#4a4c50"/></g></svg>
<div class="abs" style="left:845.500px;top:890.600px;width:19.600px;height:19.600px;border-radius:50%;background:#ec4538;color:#fff;font-size:13.500px;line-height:19.600px;text-align:center">1</div>
<svg class="abs" style="left:874.0px;top:894.5px" width="47.5" height="47.5" viewBox="0 0 48 48"><defs><clipPath id="c897"><rect width="48" height="48" rx="10.800"/></clipPath><linearGradient id="stb" x1="0" y1="0" x2="1" y2="1"><stop offset="0" stop-color="#4a8cf4"/><stop offset="1" stop-color="#2a5ad8"/></linearGradient></defs><g clip-path="url(#c897)"><rect width="48" height="48" fill="url(#stb)"/><path d="M0 34L48 10v38H0z" fill="#2a62dc" opacity=".35"/><g transform="rotate(45 24 24)"><rect x="4" y="18.500" width="14.500" height="11" rx="1.300" fill="#f6d84e"/><rect x="30" y="18.500" width="14.500" height="11" rx="1.300" fill="#f6d84e"/></g><g transform="rotate(-45 24 24)"><rect x="10" y="20" width="21" height="8" rx="1.800" fill="#f5f8fc"/><rect x="6" y="21.200" width="5" height="5.600" rx="1" fill="#e3ebf7"/></g><path d="M25 11.500c-1.500 4.500-0.500 8.500 2.200 11.300s6.800 3.700 11.300 2.200c-3.500 3.800-9.500 4-13.300 0.200s-3.800-9.700-0.200-13.700z" fill="#f5f8fc"/><path d="M25 11.500a9.500 9.500 0 0 0 13.500 13.500z" fill="#f5f8fc"/><path d="M31.500 18l3.500-3.500" stroke="#f5f8fc" stroke-width="1.300"/><circle cx="35.800" cy="13.200" r="2.300" fill="#f5f8fc"/></g></svg>
<svg class="abs" style="left:936.5px;top:894.5px" width="47.5" height="47.5" viewBox="0 0 48 48"><defs><clipPath id="c960"><rect width="48" height="48" rx="10.800"/></clipPath></defs><g clip-path="url(#c960)"><rect width="48" height="48" fill="#fdfdfe"/><path d="M33 21.500c3-1.500 5.500 0.500 5.500 3.500s-2 5-4.500 5z" fill="#6fb85a"/><g fill="none" stroke="#3f78e0" stroke-linecap="round"><path d="M22 13L12.500 39" stroke-width="4.800"/><path d="M26 13l9.500 26" stroke-width="4.800"/><path d="M15 31h18" stroke-width="5"/><path d="M9 22.500c1 5.500 4 8.500 8 9.500" stroke-width="3.600"/><path d="M24 4.500V8" stroke-width="2.400"/></g><path d="M12 40l-0.800 3M36 40l0.800 3" stroke="#3f78e0" stroke-width="1.600" stroke-linecap="round"/><circle cx="24" cy="13" r="3.600" fill="#fff" stroke="#1c1c22" stroke-width="2.200"/></g></svg>
<svg class="abs" style="left:999.2px;top:894.5px" width="47.5" height="47.5" viewBox="0 0 48 48"><defs><clipPath id="c1023"><rect width="48" height="48" rx="10.800"/></clipPath><linearGradient id="rjb" x1="0" y1="0" x2="0" y2="1"><stop offset="0" stop-color="#f9e24a"/><stop offset="1" stop-color="#f2d634"/></linearGradient></defs><g clip-path="url(#c1023)"><rect width="48" height="48" fill="url(#rjb)"/><path d="M24 20.500L45 33 24 45.500z" fill="#111"/><text x="25" y="38" font-family="Liberation Sans, sans-serif" font-weight="bold" font-size="12.500" fill="#f7df3e" letter-spacing="-0.500">JS</text></g></svg>
<div class="abs" style="left:1069.500px;top:892px;width:1px;height:62px;background:#3a3b4e"></div>
<div class="abs" style="left:1349.500px;top:892px;width:1px;height:62px;background:#3a3b4e"></div>
<svg class="abs" style="left:1090.5px;top:894.5px" width="47.5" height="47.5" viewBox="0 0 48 48"><defs><clipPath id="c1114"><rect width="48" height="48" rx="10.800"/></clipPath></defs><g clip-path="url(#c1114)"><rect width="48" height="48" fill="#f3f2f0"/><circle cx="24" cy="24" r="20.400" fill="#f6c231"/><path d="M6.250 13.750A20.500 20.500 0 0 1 41.750 13.750L24 13.750A10.250 10.250 0 0 0 15.120 29.125Z" fill="#e2493b"/><path d="M6.250 13.750A20.500 20.500 0 0 1 41.750 13.750L24 13.750A10.250 10.250 0 0 0 15.120 29.125Z" fill="#f6c231" transform="rotate(120 24 24)"/><path d="M6.250 13.750A20.500 20.500 0 0 1 41.750 13.750L24 13.750A10.250 10.250 0 0 0 15.120 29.125Z" fill="#3fa65a" transform="rotate(240 24 24)"/><circle cx="24" cy="24" r="10.250" fill="#f7f7f5"/><circle cx="24" cy="24" r="8" fill="#3f7fe8"/></g></svg>
<svg class="abs" style="left:1153.2px;top:894.5px" width="47.5" height="47.5" viewBox="0 0 48 48"><defs><clipPath id="c1177"><rect width="48" height="48" rx="10.800"/></clipPath><radialGradient id="zdb" cx=".5" cy=".5" r=".7"><stop offset="0" stop-color="#1a1a1c"/><stop offset="1" stop-color="#050506"/></radialGradient></defs><g clip-path="url(#c1177)"><rect width="48" height="48" fill="url(#zdb)"/><g fill="none" stroke="#f4f4f4" stroke-width="1.900"><rect x="11" y="12" width="24" height="22"/><rect x="17" y="18.500" width="12" height="9.500"/><path d="M11 12h26M36.500 12L12 36M11 36h25"/></g></g></svg>
<svg class="abs" style="left:1216.0px;top:894.5px" width="47.5" height="47.5" viewBox="0 0 48 48"><defs><clipPath id="c1239"><rect width="48" height="48" rx="10.800"/></clipPath></defs><g clip-path="url(#c1239)"><rect width="48" height="48" fill="#fcfcfd"/><path d="M33 8l8 4v24l-8 4-17-15-6.500 5L6 28l6-5.500L6 17l3.500-2 6.500 5z" fill="#2a8ad8"/><path d="M33 8l8 4v24l-8 4z" fill="#1f6fc0"/><path d="M33 17.500L24.500 24l8.500 6.500z" fill="#fcfcfd"/><path d="M6 17l3.500-2L33 36v4z" fill="#2a7ccc" opacity=".9"/></g></svg>
<svg class="abs" style="left:1277.600px;top:892.900px" width="50.800" height="50.800" viewBox="0 0 52 52"><defs><linearGradient id="crg" x1=".7" y1="0" x2=".2" y2="1"><stop offset="0" stop-color="#5fd0c4"/><stop offset=".5" stop-color="#6aa8e0"/><stop offset="1" stop-color="#7a5ad8"/></linearGradient></defs><circle cx="26" cy="26" r="24.500" fill="#fdfdff" stroke="url(#crg)" stroke-width="2.200"/></svg>
<svg class="abs" style="left:1371px;top:890px" width="46" height="56" viewBox="0 0 46 56"><defs><linearGradient id="dkg" x1="0" y1="0" x2="0" y2="1"><stop offset="0" stop-color="#f4f5f6"/><stop offset=".45" stop-color="#b9bbbd"/><stop offset=".86" stop-color="#7f8183"/><stop offset=".88" stop-color="#2c2d2f"/><stop offset="1" stop-color="#55575a"/></linearGradient></defs>
<rect x="1" y="8" width="4" height="36" rx="1.500" fill="#56aef2"/><rect x="40" y="10" width="5" height="34" rx="1.500" fill="#4aa4ee"/><path d="M30 8h10l4 4v6H30z" fill="#4aa4ee"/>
<path d="M4 4.500c0-2 1-3.500 3-3.500h17l17.400 16.500V54.300H4z" fill="#fcfcfd"/><path d="M24 1l17.400 16.500H28.500c-2.500 0-4.500-2-4.500-4.500z" fill="#e9edf3"/>
<path d="M9 1.500h14v3.500H9z" fill="#dcdee1"/>
<rect x="11" y="13" width="23.500" height="33" rx="1.200" fill="url(#dkg)"/></svg>
<svg class="abs" style="left:1435px;top:889px" width="45" height="56" viewBox="0 0 45 56"><defs><linearGradient id="trg" x1="0" y1="0" x2="1" y2="0"><stop offset="0" stop-color="#6b6c72"/><stop offset=".25" stop-color="#9a9ba0"/><stop offset=".6" stop-color="#77787e"/><stop offset="1" stop-color="#4d4e55"/></linearGradient></defs>
<path d="M2.500 9h40l-4 42c-0.300 2.500-2 3.500-4.500 3.500H11c-2.500 0-4.200-1-4.500-3.500z" fill="url(#trg)" opacity=".8"/>
<ellipse cx="22.500" cy="9.500" rx="20" ry="5.500" fill="#54555b"/>
<path d="M6 8l5-5 6 3 5-5 6 4 6-3 5 6-4 5-7-2-6 3-6-3-6 2z" fill="#e9eaec"/><path d="M11 3l4 6 2-3M22 1l1 7 5-3M34 2l-3 6 7 0" fill="none" stroke="#9fa0a6" stroke-width="0.900"/>
<ellipse cx="22.500" cy="10" rx="20" ry="5.500" fill="none" stroke="#b9babf" stroke-width="1" opacity=".7"/></svg>
<div class="abs" style="left:78.8px;top:950.500px;width:3.500px;height:3.500px;border-radius:50%;background:#c9cad4"></div>
<div class="abs" style="left:205.1px;top:950.500px;width:3.500px;height:3.500px;border-radius:50%;background:#c9cad4"></div>
<div class="abs" style="left:896.0px;top:950.500px;width:3.500px;height:3.500px;border-radius:50%;background:#c9cad4"></div>
<div class="abs" style="left:1112.5px;top:950.500px;width:3.500px;height:3.500px;border-radius:50%;background:#c9cad4"></div>
<div class="abs" style="left:1175.2px;top:950.500px;width:3.500px;height:3.500px;border-radius:50%;background:#c9cad4"></div>
<div class="abs" style="left:1238.0px;top:950.500px;width:3.500px;height:3.500px;border-radius:50%;background:#c9cad4"></div>
<div class="abs" style="left:1301.2px;top:950.500px;width:3.500px;height:3.500px;border-radius:50%;background:#c9cad4"></div>
<svg class="abs" style="left:1101px;top:925px" width="13" height="19" viewBox="0 0 13 19"><path d="M1 1v14l3.500-3.200 2.500 6 2.300-1-2.500-5.800H11.500z" fill="#0a0a0a" stroke="#f4f4f4" stroke-width="1.100" stroke-linejoin="round"/></svg>
<div class="abs" style="left:1228px;top:894.500px;font-size:24.500px;line-height:34px;font-family:'Liberation Sans','Noto Sans CJK SC',sans-serif;color:rgba(238,238,242,.93);text-shadow:1.200px 1.200px 1.200px rgba(0,0,0,.8);white-space:nowrap">掘金技术社区</div>
<div class="abs" style="left:1385px;top:895px;font-size:23.500px;line-height:34px;font-family:'Liberation Sans','Noto Sans CJK SC',sans-serif;color:rgba(238,238,242,.93);text-shadow:1.200px 1.200px 1.200px rgba(0,0,0,.8);white-space:nowrap">@</div>
<div class="abs" style="left:1414.500px;top:894.500px;font-size:25.700px;line-height:34px;font-family:'Liberation Sans','Noto Sans CJK SC',sans-serif;color:rgba(238,238,242,.93);text-shadow:1.200px 1.200px 1.200px rgba(0,0,0,.8);white-space:nowrap">viggozw</div>
</div>
</body>
</html>
